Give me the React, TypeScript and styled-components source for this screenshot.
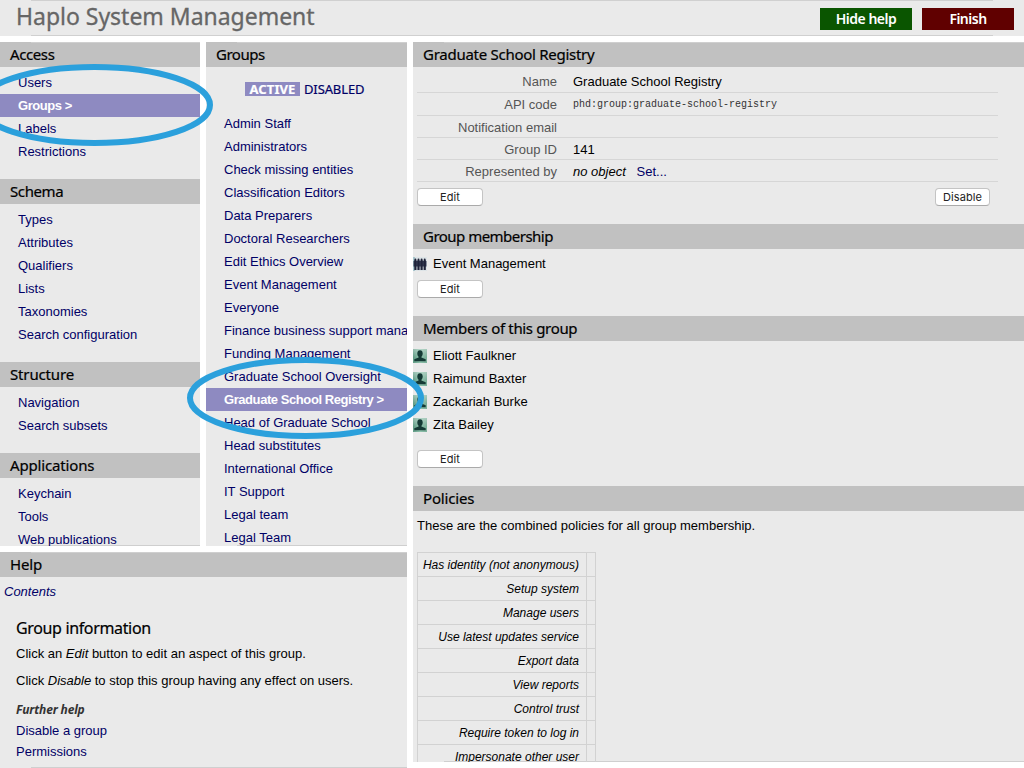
import React from "react";
import styled, { createGlobalStyle, css } from "styled-components";

const GlobalStyle = createGlobalStyle`
  * { box-sizing: border-box; }
  html, body { margin: 0; padding: 0; background: #fff; }
  body { font: 13px/23px "Liberation Sans", Arial, sans-serif; color: #000; overflow: hidden; }
`;

const heading = '"Noto Sans", "Open Sans", sans-serif';

const Page = styled.div`
  position: relative;
  width: 1024px;
  height: 768px;
  overflow: hidden;
  display: flex;
  flex-direction: column;
  gap: 6px;
`;

const edge = css`
  background-image: linear-gradient(#cfcfcf, #cfcfcf);
  background-size: 100% 1px;
  background-repeat: no-repeat;
`;

const TopBar = styled.header`
  height: 36px;
  flex: none;
  display: flex;
  align-items: flex-start;
  padding: 0 10px 0 16px;
  background-color: #eaeaea;
  background-image: linear-gradient(#d0d0d0, #d0d0d0), linear-gradient(#d0d0d0, #d0d0d0);
  background-size: 962px 1px;
  background-position: 31px 0, 31px 35px;
  background-repeat: no-repeat;
`;

const AppTitle = styled.h1`
  flex: 1;
  margin: 0;
  font: 400 23px/33px ${heading};
  letter-spacing: -0.02px;
  color: #666;
  -webkit-text-stroke: 0.3px #666;
  white-space: nowrap;
`;

const TopButton = styled.button<{ $color: string }>`
  width: 92px;
  height: 22px;
  margin: 8px 0 0 10px;
  padding: 0 0 1px;
  border: 0;
  background: ${(p) => p.$color};
  color: #fff;
  font: 600 14px/21px ${heading};
  letter-spacing: -0.5px;
`;

const Body = styled.div`
  flex: 1;
  min-height: 0;
  display: flex;
  gap: 6px;
`;

const LeftSide = styled.div`
  width: 407px;
  display: flex;
  flex-direction: column;
  gap: 6px;
`;

const Columns = styled.div`
  height: 504px;
  display: grid;
  grid-template-columns: 200px 201px;
  gap: 6px;
`;

const Panel = styled.section<{ $height?: number }>`
  height: ${(p) => (p.$height ? p.$height + "px" : "auto")};
  min-width: 0;
  overflow: hidden;
  background-color: #eaeaea;
  ${edge}
  background-position: 31px 100%;
`;

const MainPanel = styled(Panel)`
  flex: 1;
`;

const Bar = styled.h2<{ $top?: boolean; $track?: number }>`
  height: 25px;
  margin: 0;
  padding: 0 10px;
  background-color: #c1c1c1;
  ${(p) => p.$top && css`
    background-image: linear-gradient(#cfcfcf, #cfcfcf);
    background-size: 100% 1px;
    background-position: 31px 0;
    background-repeat: no-repeat;
  `}
  font: 400 15px/25px ${heading};
  letter-spacing: ${(p) => p.$track ?? -0.15}px;
  -webkit-text-stroke: 0.2px #000;
  white-space: nowrap;
`;

const List = styled.ul`
  list-style: none;
  margin: 0;
  padding: 4px 0 16px;
`;

const GroupList = styled(List)`
  padding: 0;
`;

const Item = styled.li<{ $selected?: boolean }>`
  height: 23px;
  padding-left: 18px;
  white-space: nowrap;
  color: ${(p) => (p.$selected ? "#fff" : "#000066")};
  background: ${(p) => (p.$selected ? "#8e8ac1" : "transparent")};
  font-weight: ${(p) => (p.$selected ? 700 : 400)};
  letter-spacing: ${(p) => (p.$selected ? "-0.43px" : "0")};
`;

const Toggle = styled.div`
  height: 45px;
  padding: 15px 0 0 39px;
  display: flex;
  gap: 4px;
  font: 400 13px/14px ${heading};
  letter-spacing: -0.12px;
  -webkit-text-stroke: 0.2px;
  color: #000066;
`;

const ToggleOn = styled.b`
  width: 55px;
  height: 14px;
  text-align: center;
  letter-spacing: 0.1px;
  background: #8e8ac1;
  color: #fff;
`;

const Fields = styled.dl`
  width: 581px;
  margin: 0 0 0 4px;
`;

const Field = styled.div<{ $h: number }>`
  height: ${(p) => p.$h}px;
  display: flex;
  align-items: flex-end;
  border-bottom: 1px solid #d6d6d6;
  line-height: ${(p) => (p.$h === 22 ? 18 : 20)}px;
`;

const Label = styled.dt`
  width: 140px;
  text-align: right;
  color: #555;
`;

const Value = styled.dd`
  margin: 0 0 0 16px;
`;

const Code = styled.code`
  font: 10px/20px "Liberation Mono", monospace;
  color: #333;
`;

const Link = styled.a`
  color: #000066;
`;

const Actions = styled.div<{ $top: number; $bottom: number }>`
  display: flex;
  justify-content: space-between;
  padding: ${(p) => `${p.$top}px 34px ${p.$bottom}px 4px`};
`;

const Button = styled.button<{ $w?: number }>`
  width: ${(p) => p.$w ?? 66}px;
  height: 18px;
  padding: 0;
  border: 1px solid #c4c4c4;
  border-bottom-color: #aaa;
  border-radius: 4px;
  background: #fff;
  color: #222;
  font: 11px/16px Inter, sans-serif;
  letter-spacing: 0.1px;
`;

const People = styled.div`
  padding-top: 3px;
`;

const Person = styled.div`
  height: 23px;
  display: flex;
  align-items: center;
  gap: 6px;
`;

const Intro = styled.p`
  margin: 0;
  padding: 3px 0 15px 4px;
`;

const Policies = styled.table`
  margin-left: 4px;
  border-collapse: collapse;
  font-style: italic;
  font-size: 12px;
  line-height: 21px;
  td { border: 1px solid #d2d2d2; height: 24px; padding: 2px 0 0; }
  td:first-child { width: 169px; padding-right: 7px; text-align: right; white-space: nowrap; }
  td:last-child { width: 9px; }
`;

const Contents = styled.div`
  padding: 4px 0 0 4px;
  line-height: 22px;
  font-style: italic;
  color: #000066;
`;

const HelpText = styled.div`
  padding: 12px 0 0 16px;
  line-height: 21px;
  p { margin: 0 0 6px; }
`;

const HelpTitle = styled.h3`
  margin: 0 0 2px;
  font: 400 16px/26px ${heading};
  letter-spacing: -0.35px;
  -webkit-text-stroke: 0.2px #000;
`;

const Further = styled.h4`
  margin: 0;
  padding-top: 2px;
  font: italic 700 12px/21px ${heading};
  letter-spacing: -0.15px;
  color: #333;
`;

const Callouts = styled.svg`
  position: absolute;
  inset: 0;
  pointer-events: none;
`;

const PersonIcon = () => (
  <svg width="14" height="14" viewBox="0 0 14 14">
    <defs>
      <linearGradient id="person" x1="0" y1="0" x2="1" y2="0">
        <stop offset="0" stopColor="#5f9a84" />
        <stop offset="0.5" stopColor="#8fc2ad" />
        <stop offset="1" stopColor="#79ae98" />
      </linearGradient>
      <linearGradient id="shine" x1="0" y1="0" x2="0" y2="1">
        <stop offset="0" stopColor="#fff" stopOpacity="0.35" />
        <stop offset="0.6" stopColor="#fff" stopOpacity="0" />
      </linearGradient>
    </defs>
    <rect width="14" height="14" fill="url(#person)" />
    <rect width="14" height="14" fill="url(#shine)" />
    <ellipse cx="7" cy="4.6" rx="2.7" ry="3.4" fill="#153a35" />
    <path d="M1.3 12.3V10.3L5.6 8.4V7h2.8v1.4l4.3 1.9v2z" fill="#153a35" />
  </svg>
);

const GroupIcon = () => (
  <svg width="14" height="14" viewBox="0 0 14 14">
    <rect width="14" height="14" fill="#dde4e7" />
    <rect width="2" height="14" fill="#a9c6cd" />
    <rect x="0.5" y="4" width="13" height="5.5" fill="#3a4058" />
    {[2.4, 5.5, 8.6, 11.7].map((x) => (
      <g key={x} fill="#20243a">
        <circle cx={x} cy="2.4" r="1" />
        <rect x={x - 1.1} y="3" width="2.2" height="10" />
      </g>
    ))}
  </svg>
);

const nav: [string, string[]][] = [
  ["Access", ["Users", "Groups", "Labels", "Restrictions"]],
  ["Schema", ["Types", "Attributes", "Qualifiers", "Lists", "Taxonomies", "Search configuration"]],
  ["Structure", ["Navigation", "Search subsets"]],
  ["Applications", ["Keychain", "Tools", "Web publications"]],
];

const groups = [
  "Admin Staff", "Administrators", "Check missing entities", "Classification Editors",
  "Data Preparers", "Doctoral Researchers", "Edit Ethics Overview", "Event Management",
  "Everyone", "Finance business support mana", "Funding Management",
  "Graduate School Oversight", "Graduate School Registry", "Head of Graduate School",
  "Head substitutes", "International Office", "IT Support", "Legal team", "Legal Team",
];

const members = ["Eliott Faulkner", "Raimund Baxter", "Zackariah Burke", "Zita Bailey"];

const policies = [
  "Has identity (not anonymous)", "Setup system", "Manage users", "Use latest updates service",
  "Export data", "View reports", "Control trust", "Require token to log in", "Impersonate other user",
];

const Entries = ({ names, selected }: { names: string[]; selected: string }) => (
  <>
    {names.map((n) => (
      <Item key={n} $selected={n === selected}>{n === selected ? `${n} >` : n}</Item>
    ))}
  </>
);

export default function App() {
  return (
    <Page>
      <GlobalStyle />
      <TopBar>
        <AppTitle>Haplo System Management</AppTitle>
        <TopButton $color="#0a5500">Hide help</TopButton>
        <TopButton $color="#600000">Finish</TopButton>
      </TopBar>
      <Body>
        <LeftSide>
          <Columns>
            <Panel as="nav" $height={504}>
              {nav.map(([title, names], i) => (
                <React.Fragment key={title}>
                  <Bar $top={i === 0} $track={title === "Schema" || title === "Access" ? -0.4 : undefined}>{title}</Bar>
                  <List><Entries names={names} selected="Groups" /></List>
                </React.Fragment>
              ))}
            </Panel>
            <Panel $height={504}>
              <Bar $top $track={-0.5}>Groups</Bar>
              <Toggle><ToggleOn>ACTIVE</ToggleOn><span>DISABLED</span></Toggle>
              <GroupList><Entries names={groups} selected="Graduate School Registry" /></GroupList>
            </Panel>
          </Columns>
          <Panel as="aside" $height={216}>
            <Bar $top>Help</Bar>
            <Contents>Contents</Contents>
            <HelpText>
              <HelpTitle>Group information</HelpTitle>
              <p>Click an <i>Edit</i> button to edit an aspect of this group.</p>
              <p>Click <i>Disable</i> to stop this group having any effect on users.</p>
              <Further>Further help</Further>
              <div><Link>Disable a group</Link></div>
              <div><Link>Permissions</Link></div>
            </HelpText>
          </Panel>
        </LeftSide>
        <MainPanel as="main" $height={720}>
          <Bar $top $track={-0.27}>Graduate School Registry</Bar>
          <Fields>
            <Field $h={26}><Label>Name</Label><Value>Graduate School Registry</Value></Field>
            <Field $h={23}><Label>API code</Label><Value><Code>phd:group:graduate-school-registry</Code></Value></Field>
            <Field $h={22}><Label>Notification email</Label></Field>
            <Field $h={22}><Label>Group ID</Label><Value>141</Value></Field>
            <Field $h={22}><Label>Represented by</Label><Value><i>no object</i> &nbsp; <Link>Set...</Link></Value></Field>
          </Fields>
          <Actions $top={6} $bottom={18}><Button>Edit</Button><Button $w={55}>Disable</Button></Actions>
          <Bar $track={-0.52}>Group membership</Bar>
          <People><Person><GroupIcon />Event Management</Person></People>
          <Actions $top={5} $bottom={18}><Button>Edit</Button></Actions>
          <Bar $track={-0.35}>Members of this group</Bar>
          <People>{members.map((m) => <Person key={m}><PersonIcon />{m}</Person>)}</People>
          <Actions $top={14} $bottom={18}><Button>Edit</Button></Actions>
          <Bar>Policies</Bar>
          <Intro>These are the combined policies for all group membership.</Intro>
          <Policies>
            <tbody>{policies.map((p) => <tr key={p}><td>{p}</td><td /></tr>)}</tbody>
          </Policies>
        </MainPanel>
      </Body>
      <Callouts width="1024" height="768" fill="none" stroke="#2ba0dc" strokeWidth="6">
        <ellipse cx="94.5" cy="105" rx="115.5" ry="38" />
        <ellipse cx="305.5" cy="398" rx="115.5" ry="38" />
      </Callouts>
    </Page>
  );
}
